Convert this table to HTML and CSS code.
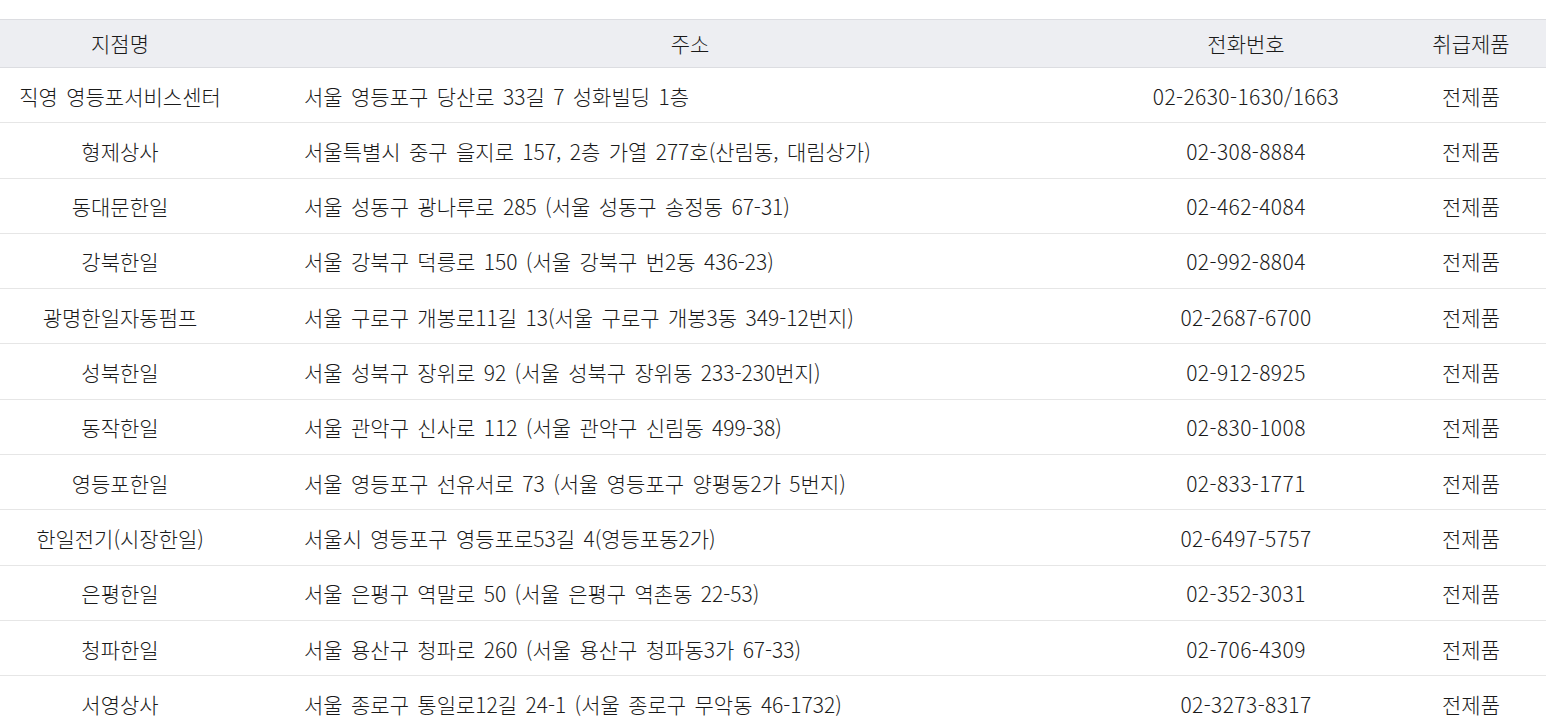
FILE: index.html
```html
<!DOCTYPE html>
<html lang="ko">
<head>
    <meta charset="UTF-8">
    <meta name="viewport" content="width=device-width, initial-scale=1.0">
    <title>대리점 안내</title>
    <link rel="stylesheet" href="styles.css">
</head>
<body>
    <main class="store-list">
        <table class="store-table">
            <colgroup>
                <col class="col-name">
                <col class="col-addr">
                <col class="col-tel">
                <col class="col-item">
            </colgroup>
            <thead>
                <tr>
                    <th>지점명</th>
                    <th>주소</th>
                    <th>전화번호</th>
                    <th class="item">취급제품</th>
                </tr>
            </thead>
            <tbody>
                <tr><td>직영 영등포서비스센터</td><td class="addr">서울 영등포구 당산로 33길 7 성화빌딩 1층</td><td class="tel">02-2630-1630/1663</td><td class="item">전제품</td></tr>
                <tr><td>형제상사</td><td class="addr">서울특별시 중구 을지로 157, 2층 가열 277호(산림동, 대림상가)</td><td class="tel">02-308-8884</td><td class="item">전제품</td></tr>
                <tr><td>동대문한일</td><td class="addr">서울 성동구 광나루로 285 (서울 성동구 송정동 67-31)</td><td class="tel">02-462-4084</td><td class="item">전제품</td></tr>
                <tr><td>강북한일</td><td class="addr">서울 강북구 덕릉로 150 (서울 강북구 번2동 436-23)</td><td class="tel">02-992-8804</td><td class="item">전제품</td></tr>
                <tr><td>광명한일자동펌프</td><td class="addr">서울 구로구 개봉로11길 13(서울 구로구 개봉3동 349-12번지)</td><td class="tel">02-2687-6700</td><td class="item">전제품</td></tr>
                <tr><td>성북한일</td><td class="addr">서울 성북구 장위로 92 (서울 성북구 장위동 233-230번지)</td><td class="tel">02-912-8925</td><td class="item">전제품</td></tr>
                <tr><td>동작한일</td><td class="addr">서울 관악구 신사로 112 (서울 관악구 신림동 499-38)</td><td class="tel">02-830-1008</td><td class="item">전제품</td></tr>
                <tr><td>영등포한일</td><td class="addr">서울 영등포구 선유서로 73 (서울 영등포구 양평동2가 5번지)</td><td class="tel">02-833-1771</td><td class="item">전제품</td></tr>
                <tr><td>한일전기(시장한일)</td><td class="addr">서울시 영등포구 영등포로53길 4(영등포동2가)</td><td class="tel">02-6497-5757</td><td class="item">전제품</td></tr>
                <tr><td>은평한일</td><td class="addr">서울 은평구 역말로 50 (서울 은평구 역촌동 22-53)</td><td class="tel">02-352-3031</td><td class="item">전제품</td></tr>
                <tr><td>청파한일</td><td class="addr">서울 용산구 청파로 260 (서울 용산구 청파동3가 67-33)</td><td class="tel">02-706-4309</td><td class="item">전제품</td></tr>
                <tr><td>서영상사</td><td class="addr">서울 종로구 통일로12길 24-1 (서울 종로구 무악동 46-1732)</td><td class="tel">02-3273-8317</td><td class="item">전제품</td></tr>
            </tbody>
        </table>
    </main>
</body>
</html>
```

FILE: styles.css
```css
body {
    margin: 0;
    padding: 0;
    background: #fff;
    color: #1a1a1a;
    font-family: "Noto Sans CJK KR", "Noto Sans", sans-serif;
    font-size: 21px;
    font-weight: 300;
    line-height: 1.1;
}

.store-list {
    padding-top: 19px;
}

.store-table {
    width: 100%;
    border-collapse: collapse;
    table-layout: fixed;
}

.col-name { width: 240px; }
.col-addr { width: 900px; }
.col-tel { width: 212px; }
.col-item { width: 194px; }

.store-table th {
    height: 47px;
    padding: 0;
    background: #edeef2;
    border-top: 1px solid #dcdde1;
    border-bottom: 1px solid #dcdde1;
    font-weight: 300;
    text-align: center;
    word-spacing: 2.5px;
}

.store-table td {
    height: 52.3px;
    padding: 2px 0 0;
    border-bottom: 1px solid #e6e6e6;
    text-align: center;
    white-space: nowrap;
    word-spacing: 2.5px;
}

.store-table td.addr {
    text-align: left;
    padding-left: 64px;
}

.store-table td.tel {
    letter-spacing: 0.4px;
}

.store-table .item {
    padding-left: 44px;
}
```
